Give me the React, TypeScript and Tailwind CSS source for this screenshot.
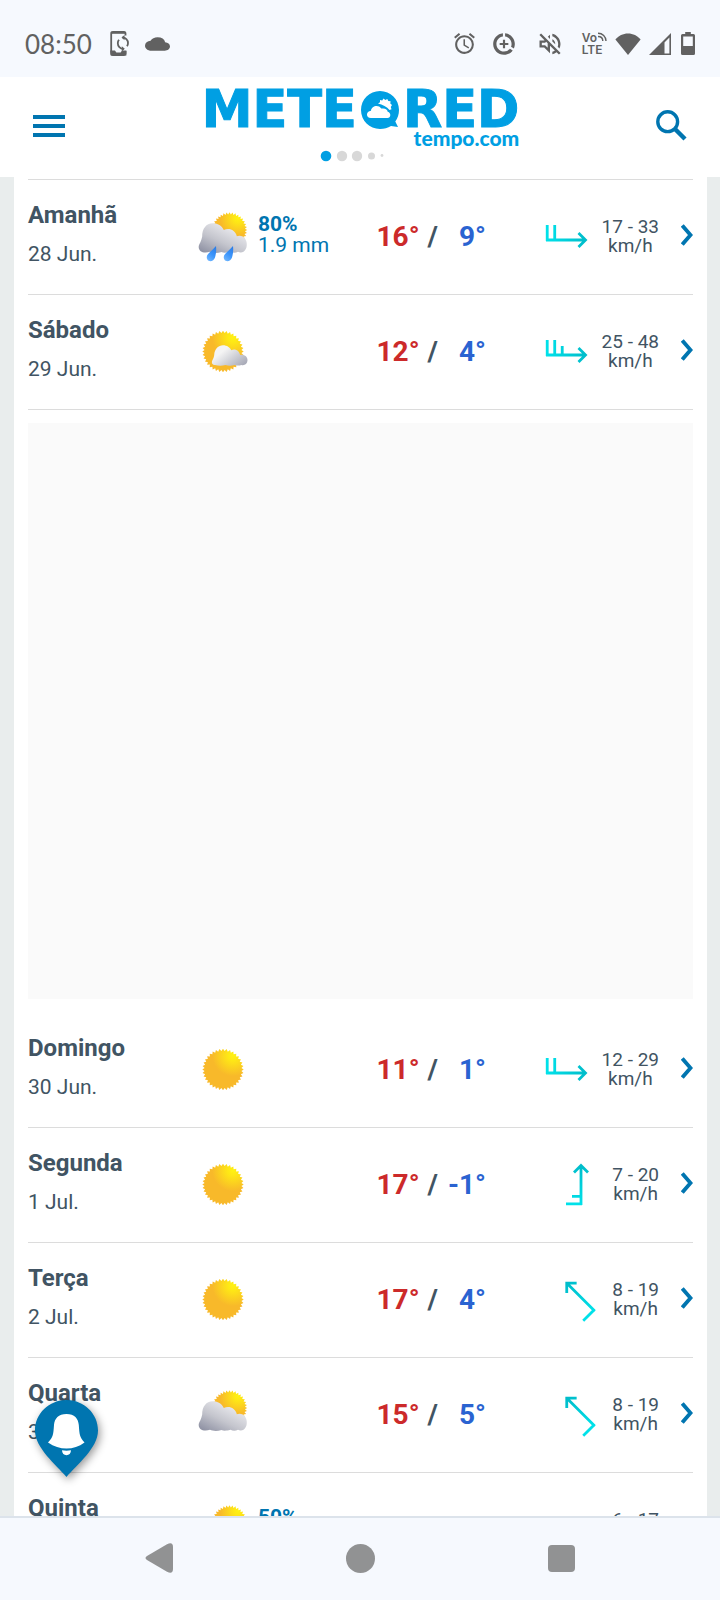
import { useId } from 'react';
import { MdAlarm, MdCloud, MdDataSaverOn, MdOutlineVolumeOff } from 'react-icons/md';

type Sky = 'sun' | 'sunCloud' | 'cloudSun' | 'rain';

type Day = {
  name: string;
  date: string;
  sky: Sky;
  chance?: string;
  amount?: string;
  max: number;
  min: number;
  wind: string;
  angle: number;
  barbs: number[];
};

const firstDays: Day[] = [
  { name: 'Amanhã', date: '28 Jun.', sky: 'rain', chance: '80%', amount: '1.9 mm', max: 16, min: 9, wind: '17 - 33', angle: 0, barbs: [15, 15] },
  { name: 'Sábado', date: '29 Jun.', sky: 'sunCloud', max: 12, min: 4, wind: '25 - 48', angle: 0, barbs: [15, 15, 9] },
];

const nextDays: Day[] = [
  { name: 'Domingo', date: '30 Jun.', sky: 'sun', max: 11, min: 1, wind: '12 - 29', angle: 0, barbs: [15, 15] },
  { name: 'Segunda', date: '1 Jul.', sky: 'sun', max: 17, min: -1, wind: '7 - 20', angle: -90, barbs: [15, 9] },
  { name: 'Terça', date: '2 Jul.', sky: 'sun', max: 17, min: 4, wind: '8 - 19', angle: -135, barbs: [15] },
  { name: 'Quarta', date: '3 Jul.', sky: 'cloudSun', max: 15, min: 5, wind: '8 - 19', angle: -135, barbs: [15] },
  { name: 'Quinta', date: '4 Jul.', sky: 'rain', chance: '50%', amount: '0.6 mm', max: 14, min: 6, wind: '6 - 17', angle: 0, barbs: [15] },
];

// Toothed outline of the sun disc
const sunPoints = (cx: number, cy: number, r: number) =>
  Array.from({ length: 72 }, (_, i) => {
    const radius = i % 2 ? r - 2.2 : r;
    const a = (i * Math.PI) / 36;
    return `${(cx + radius * Math.cos(a)).toFixed(2)},${(cy + radius * Math.sin(a)).toFixed(2)}`;
  }).join(' ');

function SkyIcon({ sky }: { sky: Sky }) {
  const id = useId();
  const behind = sky === 'rain' || sky === 'cloudSun';
  return (
    <svg viewBox="0 0 50 50" className="w-[50px] h-[50px]" aria-hidden="true">
      <defs>
        <radialGradient id={`${id}s`} cx="0.74" cy="0.16" r="0.5">
          <stop offset="0" stopColor="#fff212" />
          <stop offset="0.25" stopColor="#fee716" />
          <stop offset="1" stopColor="#f8b92a" />
        </radialGradient>
        <linearGradient id={`${id}c`} x1="0.1" y1="1" x2="0.75" y2="0.2">
          <stop offset="0" stopColor="#8d90a2" />
          <stop offset="0.5" stopColor="#c4c5cd" />
          <stop offset="1" stopColor="#e9e9ed" />
        </linearGradient>
        <linearGradient id={`${id}f`} x1="0.3" y1="0.3" x2="1" y2="0.8">
          <stop offset="0" stopColor="#f4f4f4" />
          <stop offset="1" stopColor="#a9abb8" />
        </linearGradient>
        <linearGradient id={`${id}d`} x1="0.2" y1="1" x2="0.7" y2="0">
          <stop offset="0" stopColor="#6fb6ff" />
          <stop offset="0.5" stopColor="#3a94fb" />
          <stop offset="1" stopColor="#2f7fe6" />
        </linearGradient>
      </defs>
      {behind ? (
        <polygon points={sunPoints(31.5, 18, 17.7)} fill={`url(#${id}s)`} />
      ) : (
        <polygon points={sunPoints(25, 24.5, 20.7)} fill={`url(#${id}s)`} />
      )}
      {behind && (
        <path
          d="M6 40.5C2.500 40 .5 37.500.7 34.500C.8 32.500 2 31.300 2.500 30C3.300 28 3.800 26.500 4.200 24.500C4 16.500 8.500 11.200 14.500 11.200C20.500 11.200 24.300 14.300 25.800 18C31 15.500 37.500 18 38.800 24.300C41 23.200 45.500 23.500 47.300 27C49.500 30.500 49.600 37 45.500 39.800C43.500 40.800 41.500 40.500 40 39.800C37.500 41 35 41 32.500 39.800C28 41 25.500 41 23.500 40C19.500 41.300 15 41.200 12 39.800C10 40.600 8 40.700 6 40.500Z"
          fill={`url(#${id}c)`}
        />
      )}
      {sky === 'sunCloud' && (
        <path
          d="M17 38C14 38 13.200 35.500 14.500 33C15.500 31 16 30 16.200 28C16.500 22 20.500 18.300 25 18.300C29 18.300 32 20.500 33.300 23.300C37 21.300 41.300 23.700 42.100 28C46 27 49.800 29.500 49.500 33.500C49.200 37 46.500 38.800 43.500 38C41 38.800 38.500 38.800 36.500 38C33.500 38.800 30.500 38.900 27.500 38C24 39 20.500 39 17 38Z"
          fill={`url(#${id}f)`}
        />
      )}
      {sky === 'rain' && (
        <g fill={`url(#${id}d)`}>
          <path d="M18 34C18.500 38.500 18 42 17 45.500C15.800 49.300 11.300 50.300 9.500 47.700C8 45.500 8.800 43 11 41C13.500 38.800 16 36.500 18 34Z" />
          <path d="M35 34C35.500 38.500 35 42 34 45.500C32.800 49.300 28.300 50.300 26.500 47.700C25 45.500 25.800 43 28 41C30.500 38.800 33 36.500 35 34Z" />
        </g>
      )}
    </svg>
  );
}

function WindIcon({ angle, barbs }: { angle: number; barbs: number[] }) {
  const id = useId();
  return (
    <svg viewBox="0 0 48 48" className="w-12 h-12" aria-hidden="true">
      <defs>
        <linearGradient id={id} gradientUnits="userSpaceOnUse" x1="3" y1="0" x2="45" y2="0">
          <stop offset="0" stopColor="#00e2ea" />
          <stop offset="1" stopColor="#00bac8" />
        </linearGradient>
      </defs>
      <g transform={`rotate(${angle} 24 24)`} fill="none" stroke={`url(#${id})`} strokeWidth="2.8">
        <path d="M3 28.010L43 28M35.500 21L42.500 28L35.500 35" />
        {barbs.map((len, i) => (
          <path key={i} d={`M${4.2 + i * 7.5} 29L${4.21 + i * 7.5} ${28 - len}`} />
        ))}
      </g>
    </svg>
  );
}

function DayRow({ day }: { day: Day }) {
  return (
    <li className="border-b border-[#dcdcdc]">
      <a href="#" className="grid grid-cols-[170px_60px_1fr_auto_173px_auto] items-center py-[18px]">
        <div>
          <h2 className="text-2xl leading-[34px] font-bold">{day.name}</h2>
          <p className="text-[21px] leading-[44px]">{day.date}</p>
        </div>
        <SkyIcon sky={day.sky} />
        <div className="pb-1 text-[21px] leading-[21px] text-[#0075b0]">
          {day.chance && <p className="font-bold">{day.chance}</p>}
          {day.amount && <p>{day.amount}</p>}
        </div>
        <div className="flex text-[28px] leading-8 font-bold">
          <span className="text-[#cc2a2a]">{day.max}°</span>
          <span className="ml-2">/</span>
          <span className="w-12 text-right text-[#2a63d1]">{day.min}°</span>
        </div>
        <div className="flex items-center justify-end gap-[11px] pb-0.5">
          <WindIcon angle={day.angle} barbs={day.barbs} />
          <p className="text-[19px] leading-[19px] text-center">
            {day.wind}
            <br />
            km/h
          </p>
        </div>
        <svg viewBox="0 0 12 22" className="ml-[22px] mb-[5px] w-3 h-[22px]" fill="none" stroke="#0075b0" strokeWidth="3.8" aria-hidden="true">
          <path d="M1.300 1.500L9.500 11L1.300 20.500" />
        </svg>
      </a>
    </li>
  );
}

function StatusBar() {
  return (
    <div className="flex shrink-0 items-center justify-between bg-[#f6f9fe] h-[77px] pt-[10px] px-[25px] text-[#616161]">
      <div className="flex items-center">
        <span className="font-['Lato',sans-serif] text-[26px] leading-8">08:50</span>
        <svg viewBox="0 0 19 25" className="ml-[18px] w-[19px] h-[25px]" fill="none" stroke="currentColor" strokeWidth="1.8" aria-hidden="true">
          <path d="M15.500 4.500V2.500Q15.500 1 14 1H3Q1.200 1 1.200 2.500V22Q1.200 24 3 24H14Q15.500 24 15.500 22.500V20" />
          <path d="M1.500 1.800H15.500" strokeWidth="2" />
          <path d="M1.200 20.500H4.500L6 22.500H11L12.500 20.500H15.500V23.500H1.500Z" fill="currentColor" />
          <path d="M12.500 6.500C15.500 6.500 18 9 18 12C18 13.500 17.600 14.500 17 15.300M13.500 18C10 18 7.800 15 7.800 12.200C7.800 10.800 8.200 9.800 9 8.800" />
          <path d="M14.500 4L11.500 6.600L14.500 9.200ZM11.800 15.200L14.800 17.800L11.800 20.400Z" fill="currentColor" strokeWidth="0" />
        </svg>
        <MdCloud className="ml-4 w-[25px] h-5" preserveAspectRatio="none" />
      </div>
      <div className="flex items-center">
        <MdAlarm className="w-[25px] h-[25px]" />
        <MdDataSaverOn className="ml-[14px] w-[26px] h-[26px]" />
        <MdOutlineVolumeOff className="ml-[19px] w-[28px] h-[28px]" />
        <div className="ml-[18px] font-['Inter',sans-serif] text-[12px] leading-3 font-semibold">
          <div className="flex">
            Vo
            <svg viewBox="0 0 10 10" className="w-[10px] h-[10px]" fill="none" stroke="currentColor" strokeWidth="1.4" aria-hidden="true">
              <path d="M1 1.200C5.500 1.200 9 4.500 9 9M1 4.500C4 4.500 5.800 6.500 5.800 9" />
            </svg>
          </div>
          <div>LTE</div>
        </div>
        <svg viewBox="0 0 26 22" className="ml-2 w-[26px] h-[22px]" fill="currentColor" aria-hidden="true">
          <path d="M13 22L.4 6.500C3.500 2.800 8 .5 13 .5S22.500 2.800 25.600 6.500Z" />
        </svg>
        <svg viewBox="0 0 22 22" className="ml-2 w-[22px] h-[22px]" fill="currentColor" aria-hidden="true">
          <path fillRule="evenodd" d="M22 0V22H0ZM20.400 4.500L15.500 9.500V20.400H20.400Z" />
        </svg>
        <svg viewBox="0 0 14 23" className="ml-[10px] w-[14px] h-[23px]" fill="currentColor" aria-hidden="true">
          <path fillRule="evenodd" d="M4.200 0H9.800V2H12.500Q14 2 14 3.500V21.500Q14 23 12.500 23H1.500Q0 23 0 21.500V3.500Q0 2 1.500 2H4.200ZM2.200 4.600V14H11.800V4.600Z" />
        </svg>
      </div>
    </div>
  );
}

function Logo() {
  return (
    <div className="flex flex-col text-[#009fe3]">
      <div className="flex items-center font-['DejaVu_Sans',sans-serif] text-[51px] leading-9 font-bold [-webkit-text-stroke:1px_#009fe3]">
        METE
        <svg viewBox="0 0 38 38" className="ml-1 w-[38px] h-[38px]" role="img" aria-label="O">
          <path d="M19 0C29.500 0 38 8.500 38 19C38 23.500 36.600 27.500 34.300 30.600L37 36L30 35C26.900 37 23.100 38 19 38C8.500 38 0 29.500 0 19S8.500 0 19 0Z" fill="#009fe3" />
          <path d="M10 27C4.500 27 4.800 20.200 10 19.700C10.500 14.800 17.500 13.300 20.300 17.600C24 16.800 26.500 18.500 26.700 20.800C30.500 22 30 27 26.500 27Z" fill="#fff" />
          <path d="M17 12.500L19 11.200L19 9L21.200 9.500L22.500 7.600L24.300 9L26.300 8L27.300 10L29.600 10.200L29.300 12.500L31 14L29.800 16L30.500 18.200L28.500 18.900C26 16 21.500 13.500 17 12.500Z" fill="#fff" />
        </svg>
        <span className="ml-1">RED</span>
      </div>
      <div className="text-right font-['Lato',sans-serif] text-[21px] leading-[18px] font-black">tempo.com</div>
    </div>
  );
}

export default function App() {
  return (
    <div className="relative flex h-screen flex-col overflow-hidden bg-[#e9eded] font-['Roboto',sans-serif] text-[#415463]">
      <StatusBar />

      <header className="flex shrink-0 items-start justify-between bg-white px-[33px] pt-[14px] h-[100px]">
        <button aria-label="Menu" className="mt-6 flex flex-col gap-[5px]">
          <span className="w-8 h-1 bg-[#0075b0]" />
          <span className="w-8 h-1 bg-[#0075b0]" />
          <span className="w-8 h-1 bg-[#0075b0]" />
        </button>
        <div className="flex flex-col items-center">
          <Logo />
          <svg viewBox="0 0 80 12" className="mt-[3px] w-20 h-3" fill="#d8d8d8" aria-hidden="true">
            <circle cx="6" cy="6" r="5.300" fill="#009fe3" />
            <circle cx="22" cy="6" r="5.200" />
            <circle cx="37" cy="6" r="5.200" />
            <circle cx="51.500" cy="6" r="3.500" />
            <circle cx="62" cy="5.500" r="1.400" />
          </svg>
        </div>
        <button aria-label="Pesquisar" className="mt-[19px]">
          <svg viewBox="0 0 31 31" className="w-[31px] h-[31px]" fill="none" stroke="#0075b0">
            <circle cx="11.700" cy="11.700" r="9.900" strokeWidth="3.400" />
            <path d="M19.500 19.500L29 29" strokeWidth="4.400" />
          </svg>
        </button>
      </header>

      <main className="ml-[14px] mr-[13px] min-h-0 flex-1 overflow-hidden bg-white px-[14px] pt-0.5">
        <ul className="border-t border-[#dcdcdc]">
          {firstDays.map(day => <DayRow key={day.name} day={day} />)}
        </ul>
        <div className="mt-[13px] mb-[14px] h-[576px] bg-[#fafafa]" />
        <ul>
          {nextDays.map(day => <DayRow key={day.name} day={day} />)}
        </ul>
      </main>

      {/* Notifications pin */}
      <button aria-label="Notificações" className="absolute bottom-[123px] left-[35px]">
        <svg viewBox="0 0 63 77" className="w-[63px] h-[77px] drop-shadow-[2px_3px_4px_rgba(0,0,0,0.4)]">
          <path d="M31.500 77C21 64.500 0 48 0 30.500C0 13.500 14 0 31.500 0S63 13.500 63 30.500C63 48 42 64.500 31.500 77Z" fill="#0075b0" />
          <path d="M31.500 14C39.500 14 43.300 18.500 43.800 25C44.500 34.500 44.500 37 49.500 42.500C44 46.500 38 48.500 31.500 48.500S19 46.500 13 42.500C18.300 37 18.300 34.500 19 25C19.500 18.500 23.500 14 31.500 14Z" fill="#fff" />
          <path d="M27 50.300Q31.500 51 36 50.300C36 53.500 34 55.200 31.500 55.200S27 53.500 27 50.300Z" fill="#fff" />
        </svg>
      </button>

      <nav className="flex shrink-0 items-center justify-between border-t-2 border-[#dce3eb] bg-[#f6f9fe] px-[145px] pb-0.5 h-[84px] text-[#919293]">
        <button aria-label="Voltar">
          <svg viewBox="0 0 28 30" className="w-7 h-[30px]" fill="currentColor">
            <path d="M2 13L22 1.200Q28 -1.500 28 4V26Q28 31.500 22 28.800L2 17Q-1 15 2 13Z" />
          </svg>
        </button>
        <button aria-label="Início" className="w-[29px] h-[29px] rounded-full bg-current" />
        <button aria-label="Recentes" className="w-[27px] h-[27px] rounded bg-current" />
      </nav>
    </div>
  );
}
